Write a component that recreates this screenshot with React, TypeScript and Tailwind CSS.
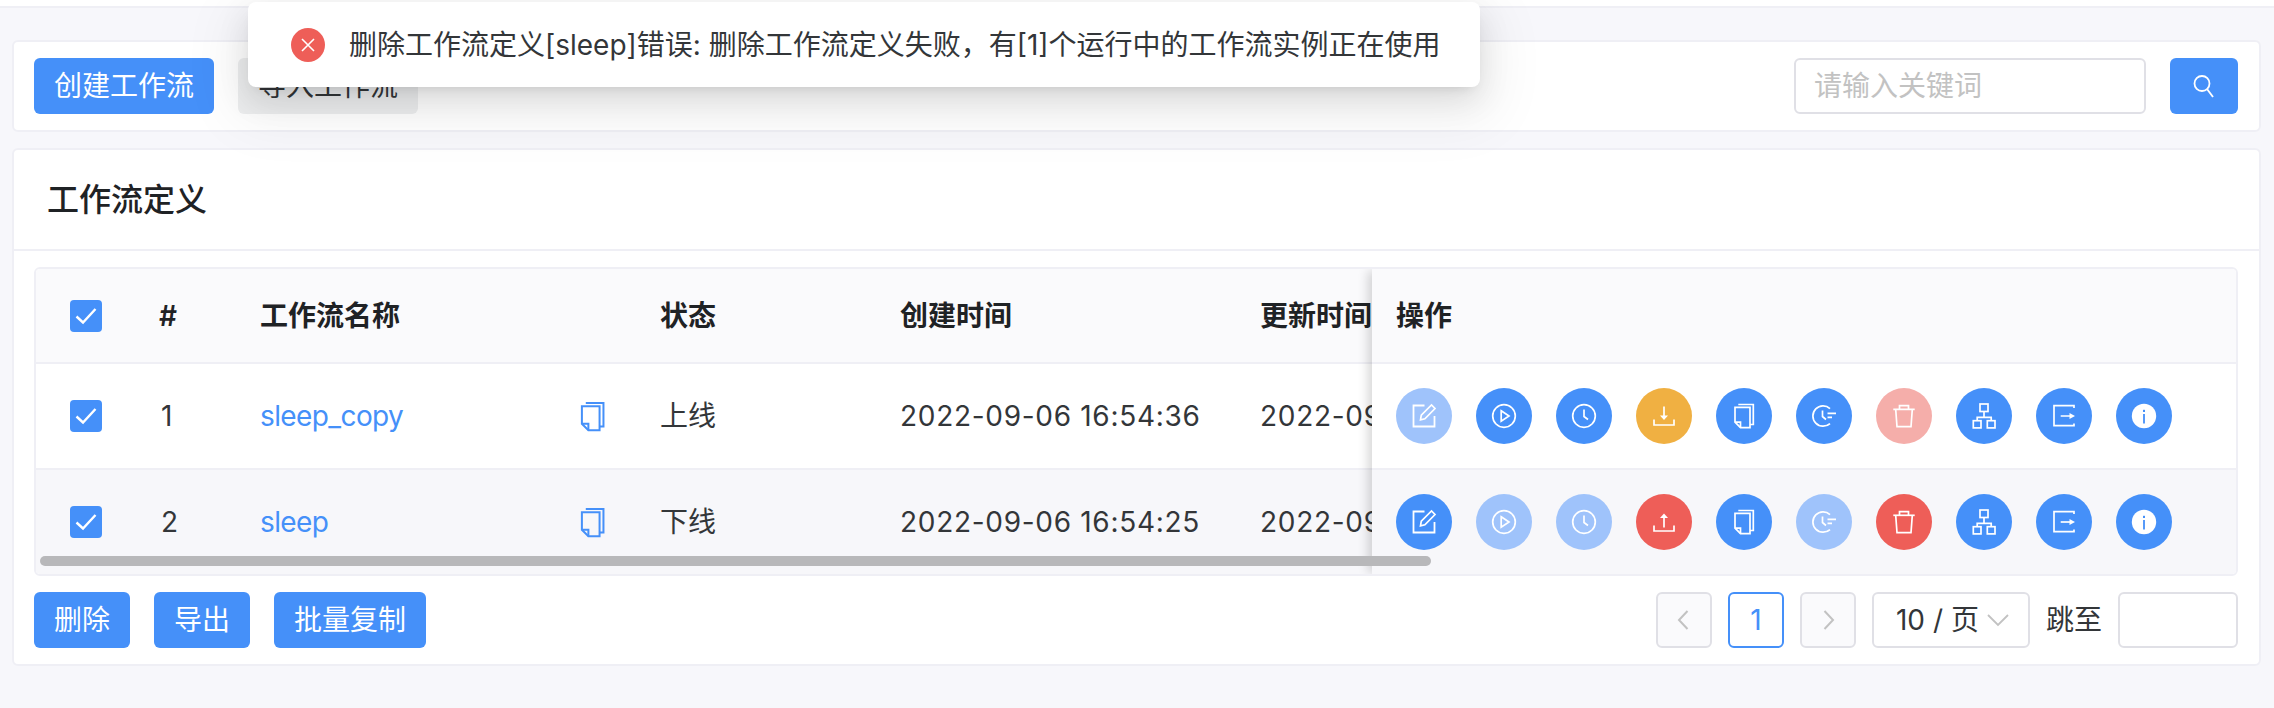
import React from "react";

const BLUE = "bg-[#4590f9]";

function Svg({ children, size = 28, className = "" }: { children: React.ReactNode; size?: number; className?: string }) {
  return (
    <svg width={size} height={size} viewBox="0 0 28 28" fill="none" stroke="currentColor" strokeWidth={1.7} className={className}>
      {children}
    </svg>
  );
}

const EditI = () => (
  <Svg>
    <path d="M14.5 3.5H3.5V24.5H24.5V14" strokeWidth={1.8} />
    <path d="M10.5 17.8L11.3 13.2L21.5 3L25 6.5L14.9 16.8Z" />
  </Svg>
);
const PlayI = () => (
  <Svg>
    <circle cx="14" cy="14" r="11.3" />
    <path d="M11.2 8.8L19 14L11.2 19.2Z" />
  </Svg>
);
const ClockI = () => (
  <Svg>
    <circle cx="14" cy="14" r="11.3" />
    <path d="M14 7.5V14.5L18 17.5" />
  </Svg>
);
const DownI = () => (
  <Svg>
    <path d="M14 4.5V15" />
    <path d="M10 13.5H18L14 18Z" fill="currentColor" stroke="none" />
    <path d="M4 17.5V23H24V17.5" />
  </Svg>
);
const UpI = () => (
  <Svg>
    <path d="M14 10V19.5" />
    <path d="M10 10H18L14 5.5Z" fill="currentColor" stroke="none" />
    <path d="M4 17.5V23H24V17.5" />
  </Svg>
);
const CopyI = ({ size = 28 }: { size?: number }) => (
  <Svg size={size}>
    <path d="M5 5.3H20V25.7H10.5L5 20.2Z" />
    <path d="M5 20.2H10.5V25.7" />
    <path d="M8.3 2.5H23.3V22.5H20" />
  </Svg>
);
const TimingI = () => (
  <Svg>
    <path d="M20 6.5A10.2 10.2 0 1 0 20 21.5" />
    <path d="M12.5 8.5V14.5L16 17.5" />
    <path d="M17.5 11.3H26M17.5 15.3H22" />
  </Svg>
);
const TrashI = () => (
  <Svg>
    <path d="M3.3 7.3H24.7" />
    <path d="M9.5 7V3.7H18.5V7" />
    <path d="M5.7 7.3L7 24.7H21L22.3 7.3" />
  </Svg>
);
const TreeI = () => (
  <Svg>
    <rect x="10" y="2" width="8" height="7.5" />
    <rect x="3.3" y="18.7" width="7.7" height="7.2" />
    <rect x="17.3" y="18.7" width="7.7" height="7.2" />
    <path d="M14 9.5V15.3M7.2 18.7V15.3H21.2V18.7" />
  </Svg>
);
const ExportI = () => (
  <Svg>
    <path d="M24 6V3.7H4V23.7H24V21.4" />
    <path d="M10.7 14H20" />
    <path d="M19.5 11L25 14L19.5 17Z" fill="currentColor" stroke="none" />
  </Svg>
);
const InfoI = () => (
  <svg width="28" height="28" viewBox="0 0 28 28">
    <circle cx="14" cy="14" r="12.2" fill="#fff" />
    <rect x="13" y="7.8" width="2" height="2.2" fill="#4590f9" />
    <rect x="13.1" y="12" width="1.8" height="9.5" fill="#4590f9" />
  </svg>
);

const Check = () => (
  <span className="w-[32px] h-[32px] rounded-[4px] bg-[#4590f9] flex items-center justify-center text-white">
    <svg width="24" height="24" viewBox="0 0 24 24" fill="none" stroke="currentColor" strokeWidth={2.4}>
      <path d="M2.5 12.5L9 18.5L21.5 5" />
    </svg>
  </span>
);

const Round = ({ c, children }: { c: string; children: React.ReactNode }) => (
  <span className={`w-[56px] h-[56px] rounded-full flex items-center justify-center text-white shrink-0 ${c}`}>{children}</span>
);

const Btn = ({ children }: { children: React.ReactNode }) => (
  <button className={`h-[56px] px-[20px] rounded-[6px] ${BLUE} text-white text-[28px] leading-none`}>{children}</button>
);

const L = "bg-[#9fc3fb]";
const B = BLUE;

const cols = ["w-[99px]", "w-[101px]", "w-[400px]", "w-[239px]", "w-[360px]", "w-[300px]"];

function LeftRow({ idx, name, status, created, bg }: { idx: string; name: string; status: string; created: string; bg: string }) {
  return (
    <div className={`flex items-center h-[106px] w-[1500px] border-b-2 border-[#efeff5] text-[#333639] ${bg}`}>
      <div className={`${cols[0]} flex justify-center shrink-0`}>
        <Check />
      </div>
      <div className={`${cols[1]} pl-[26px] shrink-0`}>{idx}</div>
      <div className={`${cols[2]} pl-[24px] pr-[27px] flex items-center justify-between shrink-0`}>
        <span className="text-[#4590f9] tracking-[-0.6px]">{name}</span>
        <span className="text-[#4590f9]">
          <CopyI size={33} />
        </span>
      </div>
      <div className={`${cols[3]} pl-[24px] shrink-0`}>{status}</div>
      <div className={`${cols[4]} pl-[25px] shrink-0 whitespace-nowrap tracking-[0.7px]`}>{created}</div>
      <div className={`${cols[5]} pl-[25px] shrink-0 whitespace-nowrap tracking-[0.7px]`}>{created}</div>
    </div>
  );
}

function Actions({ bg, items }: { bg: string; items: [string, React.ReactNode][] }) {
  return (
    <div className={`flex items-center gap-[24px] pl-[24px] h-[106px] border-b-2 border-[#efeff5] ${bg}`}>
      {items.map(([c, icon], i) => (
        <Round key={i} c={c}>
          {icon}
        </Round>
      ))}
    </div>
  );
}

export default function App() {
  return (
    <div className="relative w-[2274px] h-[708px] overflow-hidden bg-[#f7f7fb] font-['Inter','Noto_Sans_CJK_SC',sans-serif] text-[28px] text-[#333639]">
      <div className="h-[8px] bg-white border-b-2 border-[#efeff5]" />
      <div className="pl-[12px] pr-[13px] pt-[32px] flex flex-col gap-[16px]">
        <div className="h-[92px] bg-white border-2 border-[#efeff5] rounded-[6px] pl-[20px] pr-[21px] flex items-center justify-between">
          <div className="flex gap-[24px]">
            <Btn>创建工作流</Btn>
            <button className="h-[56px] px-[20px] rounded-[6px] bg-[#eeeff0] text-[#333639] text-[28px] leading-none">导入工作流</button>
          </div>
          <div className="flex gap-[24px]">
            <input
              placeholder="请输入关键词"
              className="w-[352px] h-[56px] border-2 border-[#e0e0e6] rounded-[6px] px-[18px] text-[28px] outline-none placeholder:text-[#c2c2c2]"
            />
            <button className={`w-[68px] h-[56px] rounded-[6px] ${BLUE} flex items-center justify-center text-white`}>
              <svg width="28" height="28" viewBox="0 0 28 28" fill="none" stroke="currentColor" strokeWidth={1.8}>
                <circle cx="12" cy="11.5" r="7.5" />
                <path d="M17 17L23 25" />
              </svg>
            </button>
          </div>
        </div>

        <div className="h-[518px] bg-white border-2 border-[#efeff5] rounded-[6px]">
          <div className="h-[99px] pl-[33px] flex items-center border-b-2 border-[#efeff5] text-[32px] font-medium text-[#1f2225] box-content">工作流定义</div>
          <div className="pl-[20px] pr-[21px] pt-[16px]">
            <div className="relative h-[309px] border-2 border-[#efeff5] rounded-[6px] overflow-hidden flex">
              <div className="flex-1 min-w-0 overflow-hidden">
                <div className="flex items-center h-[95px] w-[1500px] bg-[#fafafc] border-b-2 border-[#efeff5] font-semibold text-[#1f2225]">
                  <div className={`${cols[0]} flex justify-center shrink-0`}>
                    <Check />
                  </div>
                  <div className={`${cols[1]} pl-[24px] shrink-0`}>#</div>
                  <div className={`${cols[2]} pl-[24px] shrink-0`}>工作流名称</div>
                  <div className={`${cols[3]} pl-[24px] shrink-0`}>状态</div>
                  <div className={`${cols[4]} pl-[25px] shrink-0`}>创建时间</div>
                  <div className={`${cols[5]} pl-[25px] shrink-0`}>更新时间</div>
                </div>
                <LeftRow idx="1" name="sleep_copy" status="上线" created="2022-09-06 16:54:36" bg="bg-white" />
                <LeftRow idx="2" name="sleep" status="下线" created="2022-09-06 16:54:25" bg="bg-[#f7f7fa]" />
              </div>
              <div className="w-[864px] shrink-0 relative z-10 shadow-[-6px_0_10px_-2px_rgba(0,0,0,0.16)]">
                <div className="h-[95px] bg-[#fafafc] border-b-2 border-[#efeff5] pl-[24px] flex items-center font-semibold text-[#1f2225]">操作</div>
                <Actions
                  bg="bg-white"
                  items={[
                    [L, <EditI />],
                    [B, <PlayI />],
                    [B, <ClockI />],
                    ["bg-[#f0b042]", <DownI />],
                    [B, <CopyI />],
                    [B, <TimingI />],
                    ["bg-[#f5aeaa]", <TrashI />],
                    [B, <TreeI />],
                    [B, <ExportI />],
                    [B, <InfoI />],
                  ]}
                />
                <Actions
                  bg="bg-[#f7f7fa]"
                  items={[
                    [B, <EditI />],
                    [L, <PlayI />],
                    [L, <ClockI />],
                    ["bg-[#ee5e58]", <UpI />],
                    [B, <CopyI />],
                    [L, <TimingI />],
                    ["bg-[#ee5e58]", <TrashI />],
                    [B, <TreeI />],
                    [B, <ExportI />],
                    [B, <InfoI />],
                  ]}
                />
              </div>
              <div className="absolute left-[4px] bottom-[8px] w-[1391px] h-[10px] rounded-full bg-[#b8b8ba] z-20" />
            </div>

            <div className="mt-[16px] flex items-center justify-between">
              <div className="flex gap-[24px]">
                <Btn>删除</Btn>
                <Btn>导出</Btn>
                <Btn>批量复制</Btn>
              </div>
              <div className="flex items-center">
                <span className="w-[56px] h-[56px] rounded-[6px] border-2 border-[#e0e0e6] bg-[#fafafc] flex items-center justify-center text-[#c2c2c2]">
                  <svg width="24" height="24" viewBox="0 0 24 24" fill="none" stroke="currentColor" strokeWidth={2}>
                    <path d="M15.5 3L7 12L15.5 21" />
                  </svg>
                </span>
                <span className="ml-[16px] w-[56px] h-[56px] rounded-[6px] border-2 border-[#4590f9] flex items-center justify-center text-[#4590f9]">1</span>
                <span className="ml-[16px] w-[56px] h-[56px] rounded-[6px] border-2 border-[#e0e0e6] bg-[#fafafc] flex items-center justify-center text-[#c2c2c2]">
                  <svg width="24" height="24" viewBox="0 0 24 24" fill="none" stroke="currentColor" strokeWidth={2}>
                    <path d="M8.5 3L17 12L8.5 21" />
                  </svg>
                </span>
                <span className="ml-[16px] w-[158px] h-[56px] rounded-[6px] border-2 border-[#e0e0e6] flex items-center pl-[22px] whitespace-nowrap">
                  10 / 页
                  <svg className="ml-[8px] text-[#c2c2c2]" width="22" height="14" viewBox="0 0 22 14" fill="none" stroke="currentColor" strokeWidth={1.8}>
                    <path d="M1 2L11 12L21 2" />
                  </svg>
                </span>
                <span className="ml-[16px] whitespace-nowrap">跳至</span>
                <input className="ml-[16px] w-[120px] h-[56px] rounded-[6px] border-2 border-[#e0e0e6] outline-none" />
              </div>
            </div>
          </div>
        </div>
      </div>

      <div className="absolute left-[248px] top-[2px] w-[1232px] h-[85px] bg-white rounded-[8px] shadow-[0_6px_12px_-8px_rgba(0,0,0,0.16),0_12px_32px_0_rgba(0,0,0,0.1),0_18px_56px_16px_rgba(0,0,0,0.06)] flex items-center pl-[43px] whitespace-nowrap text-[#333639]">
        <span className="w-[34px] h-[34px] rounded-full bg-[#ee5e58] flex items-center justify-center text-white shrink-0">
          <svg width="16" height="16" viewBox="0 0 16 16" fill="none" stroke="currentColor" strokeWidth={1.6}>
            <path d="M2 2L14 14M14 2L2 14" />
          </svg>
        </span>
        <span className="ml-[24px]">删除工作流定义[sleep]错误: 删除工作流定义失败，有[1]个运行中的工作流实例正在使用</span>
      </div>
    </div>
  );
}
